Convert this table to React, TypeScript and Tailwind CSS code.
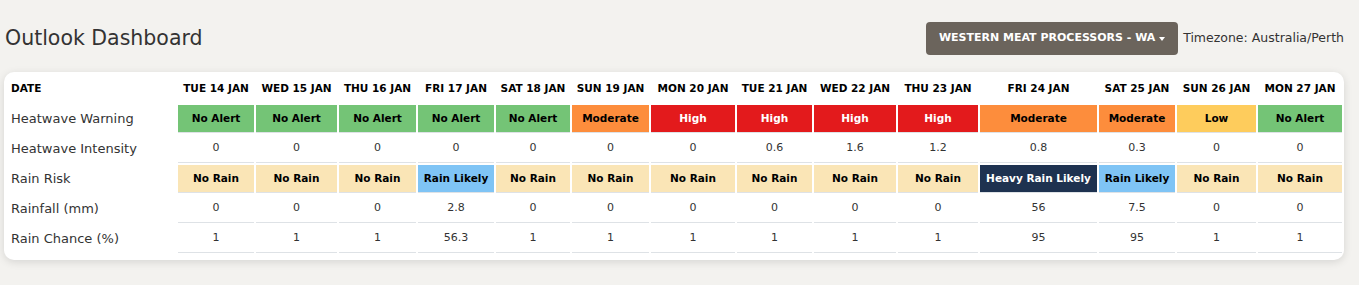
import React from "react";

type Day = {
    label: string;
    width: number;
    warning: string;
    intensity: string;
    rain: string;
    rainfall: string;
    chance: string;
};

const days: Day[] = [
    { label: "TUE 14 JAN", width: 76, warning: "No Alert", intensity: "0", rain: "No Rain", rainfall: "0", chance: "1" },
    { label: "WED 15 JAN", width: 81, warning: "No Alert", intensity: "0", rain: "No Rain", rainfall: "0", chance: "1" },
    { label: "THU 16 JAN", width: 77, warning: "No Alert", intensity: "0", rain: "No Rain", rainfall: "0", chance: "1" },
    { label: "FRI 17 JAN", width: 76, warning: "No Alert", intensity: "0", rain: "Rain Likely", rainfall: "2.8", chance: "56.3" },
    { label: "SAT 18 JAN", width: 74, warning: "No Alert", intensity: "0", rain: "No Rain", rainfall: "0", chance: "1" },
    { label: "SUN 19 JAN", width: 77, warning: "Moderate", intensity: "0", rain: "No Rain", rainfall: "0", chance: "1" },
    { label: "MON 20 JAN", width: 84, warning: "High", intensity: "0", rain: "No Rain", rainfall: "0", chance: "1" },
    { label: "TUE 21 JAN", width: 75, warning: "High", intensity: "0.6", rain: "No Rain", rainfall: "0", chance: "1" },
    { label: "WED 22 JAN", width: 82, warning: "High", intensity: "1.6", rain: "No Rain", rainfall: "0", chance: "1" },
    { label: "THU 23 JAN", width: 80, warning: "High", intensity: "1.2", rain: "No Rain", rainfall: "0", chance: "1" },
    { label: "FRI 24 JAN", width: 117, warning: "Moderate", intensity: "0.8", rain: "Heavy Rain Likely", rainfall: "56", chance: "95" },
    { label: "SAT 25 JAN", width: 76, warning: "Moderate", intensity: "0.3", rain: "Rain Likely", rainfall: "7.5", chance: "95" },
    { label: "SUN 26 JAN", width: 79, warning: "Low", intensity: "0", rain: "No Rain", rainfall: "0", chance: "1" },
    { label: "MON 27 JAN", width: 84, warning: "No Alert", intensity: "0", rain: "No Rain", rainfall: "0", chance: "1" },
];

// colour for each badge value
const badgeClass: Record<string, string> = {
    "No Alert": "bg-[#74c476] text-black",
    "Low": "bg-[#fecc5c] text-black",
    "Moderate": "bg-[#fd8d3c] text-black",
    "High": "bg-[#e31a1c] text-white",
    "No Rain": "bg-[#fae5b6] text-black",
    "Rain Likely": "bg-[#7fc4f5] text-black",
    "Heavy Rain Likely": "bg-[#1e3250] text-white",
};

const labelCell = "h-[28px] pl-[5px] text-left text-[13px] text-[#333] font-normal whitespace-nowrap";
const dataCell = "h-[28px] p-0 text-center border-b border-[#dee2e6] whitespace-nowrap";

function BadgeRow({ label, values }: { label: string; values: string[] }) {
    return (
        <tr>
            <td className={labelCell}>{label}</td>
            {values.map((v, i) => (
                <td key={i} className={`${dataCell} text-[10.5px] font-bold ${badgeClass[v]}`}>
                    {v}
                </td>
            ))}
        </tr>
    );
}

function ValueRow({ label, values }: { label: string; values: string[] }) {
    return (
        <tr>
            <td className={labelCell}>{label}</td>
            {values.map((v, i) => (
                <td key={i} className={`${dataCell} text-[11px] text-[#333]`}>
                    {v}
                </td>
            ))}
        </tr>
    );
}

export default function App() {
    return (
        <div
            className="min-h-[285px] w-full bg-[#f3f2ef]"
            style={{ fontFamily: '"DejaVu Sans", "Open Sans", sans-serif' }}
        >
            <div className="ml-[4px] w-[1340px] pt-[22px]">
                <div className="flex items-center justify-between">
                    <h1 className="text-[20.5px] font-normal text-[#333] pl-[1px]">Outlook Dashboard</h1>
                    <div className="flex items-center">
                        <button className="flex h-[33px] w-[252px] items-center justify-center rounded-[4px] bg-[#6b645c] text-[11px] font-bold text-white">
                            WESTERN MEAT PROCESSORS - WA
                            <span className="ml-[4px] inline-block border-x-[3px] border-t-[4px] border-x-transparent border-t-white" />
                        </button>
                        <span className="ml-[5px] text-[12.5px] text-[#333]">Timezone: Australia/Perth</span>
                    </div>
                </div>

                <div className="mt-[17px] rounded-[10px] bg-white pb-[5px] shadow-[0_2px_8px_rgba(0,0,0,0.12)]">
                    <table className="table-fixed border-separate border-spacing-[2px]">
                        <colgroup>
                            <col style={{ width: 170 }} />
                            {days.map((d) => (
                                <col key={d.label} style={{ width: d.width }} />
                            ))}
                        </colgroup>
                        <thead>
                            <tr>
                                <th className="h-[29px] pl-[5px] text-left text-[10.5px] font-bold text-black">DATE</th>
                                {days.map((d) => (
                                    <th key={d.label} className="h-[29px] p-0 text-center text-[10.5px] font-bold text-black whitespace-nowrap">
                                        {d.label}
                                    </th>
                                ))}
                            </tr>
                        </thead>
                        <tbody>
                            <BadgeRow label="Heatwave Warning" values={days.map((d) => d.warning)} />
                            <ValueRow label="Heatwave Intensity" values={days.map((d) => d.intensity)} />
                            <BadgeRow label="Rain Risk" values={days.map((d) => d.rain)} />
                            <ValueRow label="Rainfall (mm)" values={days.map((d) => d.rainfall)} />
                            <ValueRow label="Rain Chance (%)" values={days.map((d) => d.chance)} />
                        </tbody>
                    </table>
                </div>
            </div>
        </div>
    );
}
